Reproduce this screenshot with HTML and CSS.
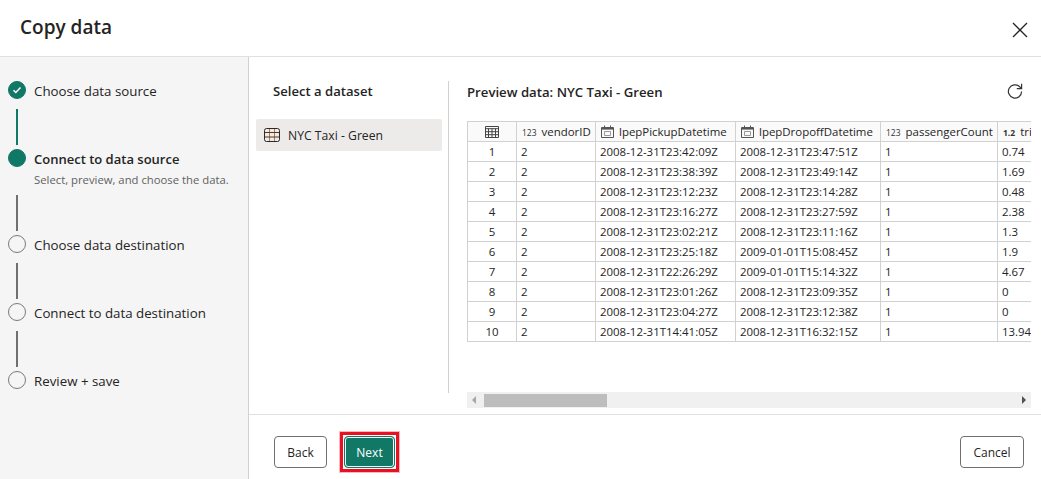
FILE: index.html
```html
<!DOCTYPE html>
<html lang="en">
<head>
    <meta charset="UTF-8">
    <title>Copy data</title>
    <link rel="stylesheet" href="styles.css">
</head>
<body>
    <svg class="defs">
        <symbol id="grid" viewBox="0 0 14 12">
            <path d="M.5.5h13v11H.5zM.5 2.7h13M.5 5.7h13M.5 8.7h13M3.5 2.7v8.8M7 2.7v8.8M10.5 2.7v8.8" fill="none" stroke="#444" stroke-width="1"/>
        </symbol>
        <symbol id="calendar" viewBox="0 0 13 13">
            <path d="M.5 2.5h12v10H.5zM3.5 .5v2M9.5 .5v2" fill="none" stroke="#555" stroke-width="1"/>
            <path d="M1 3h11v1.6H1z" fill="#555"/>
            <path d="M3.5 6.5h6v4h-6z" fill="none" stroke="#999" stroke-width="1"/>
        </symbol>
    </svg>

    <header class="title-bar">
        <h1>Copy data</h1>
        <svg class="close-icon" width="16" height="16" viewBox="0 0 16 16"><path d="M1 1l14 14M15 1L1 15" stroke="#242424" stroke-width="1.3" fill="none"/></svg>
    </header>

    <div class="dialog-body">
        <nav class="steps">
            <div class="step">
                <span class="dot done"><svg width="10" height="10" viewBox="0 0 10 10"><path d="M1.5 5.3l2.3 2.2 4.7-5" stroke="#fff" stroke-width="1.5" fill="none"/></svg></span>
                <span class="step-name">Choose data source</span>
            </div>
            <div class="line line-done"></div>
            <div class="step">
                <span class="dot done"></span>
                <span class="step-name current">Connect to data source</span>
            </div>
            <p class="step-note">Select, preview, and choose the data.</p>
            <div class="line line-short"></div>
            <div class="step">
                <span class="dot"></span>
                <span class="step-name">Choose data destination</span>
            </div>
            <div class="line"></div>
            <div class="step">
                <span class="dot"></span>
                <span class="step-name">Connect to data destination</span>
            </div>
            <div class="line"></div>
            <div class="step">
                <span class="dot"></span>
                <span class="step-name">Review + save</span>
            </div>
        </nav>

        <main class="content">
            <div class="panes">
                <section class="datasets">
                    <h2 class="datasets-title">Select a dataset</h2>
                    <div class="dataset-item">
                        <svg class="dataset-icon" width="16" height="16" viewBox="0 0 16 16">
                            <path d="M5.5 1.5v13M10.5 1.5v13" stroke="#b5793f" fill="none"/>
                            <path d="M.5 5.5h15M.5 10h15" stroke="#4a3a30" fill="none"/>
                            <rect x=".5" y="1.5" width="15" height="13" rx="2" fill="none" stroke="#2e2622"/>
                        </svg>
                        <span>NYC Taxi - Green</span>
                    </div>
                </section>

                <section class="preview">
                    <div class="preview-head">
                        <h2 class="preview-title">Preview data: NYC Taxi - Green</h2>
                        <svg class="refresh-icon" width="16" height="16" viewBox="0 0 16 16"><path d="M14.6 8.5a6.6 6.6 0 1 1-2.2-5L14.5 5.4M14.6 .8v4.8H9.8" stroke="#333" stroke-width="1.2" fill="none"/></svg>
                    </div>
                    <div class="table-wrap">
                        <table class="data-table">
                            <colgroup>
                                <col class="c-num"><col class="c-vendor"><col class="c-pick"><col class="c-drop"><col class="c-count"><col class="c-trip">
                            </colgroup>
                            <thead>
                                <tr>
                                    <th class="row-num"><svg class="th-grid" width="14" height="12"><use href="#grid"/></svg></th>
                                    <th><span class="type">123</span>vendorID</th>
                                    <th><svg class="cal" width="13" height="13"><use href="#calendar"/></svg>lpepPickupDatetime</th>
                                    <th><svg class="cal" width="13" height="13"><use href="#calendar"/></svg>lpepDropoffDatetime</th>
                                    <th><span class="type">123</span>passengerCount</th>
                                    <th><span class="type type-dec">1.2</span>tripDistance</th>
                                </tr>
                            </thead>
                            <tbody>
                                <tr><td class="row-num">1</td><td>2</td><td>2008-12-31T23:42:09Z</td><td>2008-12-31T23:47:51Z</td><td>1</td><td>0.74</td></tr>
                                <tr><td class="row-num">2</td><td>2</td><td>2008-12-31T23:38:39Z</td><td>2008-12-31T23:49:14Z</td><td>1</td><td>1.69</td></tr>
                                <tr><td class="row-num">3</td><td>2</td><td>2008-12-31T23:12:23Z</td><td>2008-12-31T23:14:28Z</td><td>1</td><td>0.48</td></tr>
                                <tr><td class="row-num">4</td><td>2</td><td>2008-12-31T23:16:27Z</td><td>2008-12-31T23:27:59Z</td><td>1</td><td>2.38</td></tr>
                                <tr><td class="row-num">5</td><td>2</td><td>2008-12-31T23:02:21Z</td><td>2008-12-31T23:11:16Z</td><td>1</td><td>1.3</td></tr>
                                <tr><td class="row-num">6</td><td>2</td><td>2008-12-31T23:25:18Z</td><td>2009-01-01T15:08:45Z</td><td>1</td><td>1.9</td></tr>
                                <tr><td class="row-num">7</td><td>2</td><td>2008-12-31T22:26:29Z</td><td>2009-01-01T15:14:32Z</td><td>1</td><td>4.67</td></tr>
                                <tr><td class="row-num">8</td><td>2</td><td>2008-12-31T23:01:26Z</td><td>2008-12-31T23:09:35Z</td><td>1</td><td>0</td></tr>
                                <tr><td class="row-num">9</td><td>2</td><td>2008-12-31T23:04:27Z</td><td>2008-12-31T23:12:38Z</td><td>1</td><td>0</td></tr>
                                <tr><td class="row-num">10</td><td>2</td><td>2008-12-31T14:41:05Z</td><td>2008-12-31T16:32:15Z</td><td>1</td><td>13.94</td></tr>
                            </tbody>
                        </table>
                    </div>
                    <div class="scrollbar">
                        <span class="arrow arrow-left"></span>
                        <span class="thumb"></span>
                        <span class="arrow arrow-right"></span>
                    </div>
                </section>
            </div>

            <footer class="actions">
                <button class="btn">Back</button>
                <span class="highlight"><button class="btn btn-primary">Next</button></span>
                <button class="btn btn-cancel">Cancel</button>
            </footer>
        </main>
    </div>
</body>
</html>
```

FILE: styles.css
```css
* {
    box-sizing: border-box;
}
html, body {
    height: 100%;
}
body {
    margin: 0;
    background-color: #fff;
    color: #242424;
    font-family: 'Open Sans', 'Noto Sans', sans-serif;
    font-size: 13px;
    display: flex;
    flex-direction: column;
    overflow: hidden;
}
.defs {
    display: none;
}
h1, h2, p {
    margin: 0;
}

.title-bar {
    height: 57px;
    flex: none;
    border-bottom: 1px solid #e0e0e0;
    display: flex;
    align-items: center;
    justify-content: space-between;
    padding: 0 13px 0 20px;
}
.title-bar h1 {
    font-size: 19px;
    font-weight: 600;
    margin-top: -2px;
}
.close-icon {
    margin-top: 3px;
}

.dialog-body {
    flex: 1;
    display: flex;
    min-height: 0;
}

.steps {
    width: 249px;
    flex: none;
    background-color: #f5f5f5;
    border-right: 1px solid #d1d1d1;
    padding: 24px 0 0 8px;
}
.step {
    display: flex;
    align-items: center;
    height: 18px;
    gap: 8px;
}
.dot {
    width: 18px;
    height: 18px;
    flex: none;
    border-radius: 50%;
    border: 1px solid #7a7a7a;
    display: flex;
    align-items: center;
    justify-content: center;
}
.dot.done {
    background-color: #117865;
    border-color: #117865;
}
.step-name {
    font-size: 13.3px;
    white-space: nowrap;
    margin-top: 2px;
}
.step-name.current {
    font-weight: 600;
    font-size: 13px;
}
.step-note {
    font-size: 11.3px;
    color: #616161;
    margin: 5px 0 0 26px;
    height: 15px;
    line-height: 15px;
    white-space: nowrap;
}
.line {
    width: 2px;
    height: 36px;
    background-color: #707070;
    margin: 10px 0 4px 8px;
}
.line-done {
    background-color: #117865;
}
.line-short {
    margin-top: 8px;
}

.content {
    flex: 1;
    min-width: 0;
    display: flex;
    flex-direction: column;
}
.panes {
    flex: 1;
    min-height: 0;
    display: flex;
    border-bottom: 1px solid #e0e0e0;
    padding-top: 24px;
}

.datasets {
    width: 200px;
    height: 312px;
    flex: none;
    border-right: 1px solid #d1d1d1;
    padding: 0 6px 0 7px;
}
.datasets-title {
    font-size: 13.1px;
    font-weight: 600;
    margin: 1px 0 0 17px;
    line-height: 18px;
}
.dataset-item {
    margin-top: 19px;
    height: 32px;
    background-color: #edebe9;
    border-radius: 2px;
    display: flex;
    align-items: center;
    gap: 8px;
    padding-left: 8px;
    font-size: 12.2px;
}

.preview {
    flex: 1;
    min-width: 0;
    padding: 0 10px 0 18px;
}
.preview-head {
    height: 22px;
    display: flex;
    align-items: center;
    justify-content: space-between;
}
.preview-title {
    font-size: 13.2px;
    font-weight: 600;
}
.refresh-icon {
    margin: -2px 8px 0 0;
}
.table-wrap {
    margin-top: 18px;
    height: 221px;
    overflow: hidden;
}
.data-table {
    border-collapse: collapse;
    table-layout: fixed;
    width: 600px;
    font-size: 11.45px;
}
.c-num { width: 49px; }
.c-vendor { width: 79px; }
.c-pick { width: 140px; }
.c-drop { width: 145px; }
.c-count { width: 117px; }
.c-trip { width: 70px; }
.data-table th, .data-table td {
    border: 1px solid #d1d1d1;
    height: 20px;
    padding: 0 4px;
    text-align: left;
    white-space: nowrap;
    overflow: hidden;
    font-weight: 400;
}
.data-table th {
    background-color: #fafafa;
}
.data-table .row-num {
    text-align: center;
}
.th-grid {
    vertical-align: -2px;
}
.type {
    font-size: 8.5px;
    margin: 0 5px 0 1px;
    color: #333;
}
.type-dec {
    font-weight: 700;
}
.cal {
    vertical-align: -2px;
    margin: 0 5px 0 1px;
}

.scrollbar {
    margin-top: 50px;
    height: 16px;
    background-color: #f0f0f0;
    display: flex;
    align-items: center;
    padding: 0 5px;
}
.thumb {
    width: 123px;
    height: 13px;
    background-color: #bdbdbd;
    margin-left: 8px;
}
.arrow {
    width: 0;
    height: 0;
    border-top: 4px solid transparent;
    border-bottom: 4px solid transparent;
}
.arrow-left {
    border-right: 4px solid #a6a6a6;
}
.arrow-right {
    border-left: 4px solid #505050;
    margin-left: auto;
}

.actions {
    height: 64px;
    flex: none;
    display: flex;
    align-items: center;
    padding: 10px 17px 0 25px;
}
.btn {
    height: 32px;
    width: 53px;
    border: 1px solid #707070;
    border-radius: 4px;
    background-color: #fff;
    color: #242424;
    font-family: inherit;
    font-size: 12px;
    padding: 0;
}
.highlight {
    display: flex;
    margin-left: 13px;
    border: 3px solid #e81123;
    box-shadow: 0 0 0 1px #f6b9b9;
    padding: 1px;
}
.btn-primary {
    width: 51px;
    background-color: #117865;
    border-color: #117865;
    box-shadow: inset 0 0 0 1px #fff;
    color: #fff;
    font-weight: 500;
    border-radius: 4px;
}
.btn-cancel {
    width: 64px;
    margin-left: auto;
}
```
